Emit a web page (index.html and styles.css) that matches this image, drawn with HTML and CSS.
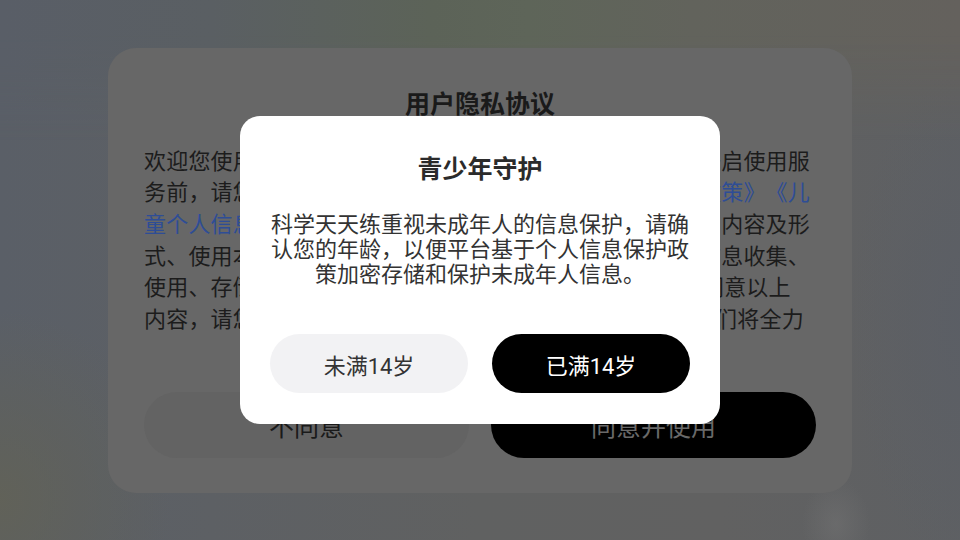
FILE: index.html
```html
<!DOCTYPE html>
<html lang="zh-CN">
<head>
<meta charset="utf-8">
<title>青少年守护</title>
<link rel="stylesheet" href="styles.css">
</head>
<body>
<main class="screen">
  <section class="card">
    <h2 class="card-title">用户隐私协议</h2>
    <div class="card-scroll">
      <p class="card-text">欢迎您使用科学天天练！我们很重视您的隐私保护，在您开启使用服<br>务前，请您务必仔细阅读并充分理解<a class="link">《用户协议》</a><a class="link">《隐私政策》</a><a class="link">《儿<br>童个人信息保护规则》</a>，以便了解我们提供的产品和服务的内容及形<br>式、使用本服务所需要遵守的规则，以及我们对您的个人信息收集、<br>使用、存储和保护14岁以下儿童信息的规则。您已阅读并同意以上<br>内容，请您点击“同意并使用”按钮开始使用我们的产品，我们将全力</p>
    </div>
    <div class="actions actions-card">
      <button class="btn btn-card-light">不同意</button>
      <button class="btn btn-card-dark">同意并使用</button>
    </div>
  </section>

  <div class="overlay">
    <div class="dialog" role="dialog">
      <h3 class="dialog-title">青少年守护</h3>
      <p class="dialog-text">科学天天练重视未成年人的信息保护，请确认您的年龄，以便平台基于个人信息保护政策加密存储和保护未成年人信息。</p>
      <div class="actions actions-dialog">
        <button class="btn btn-light">未满14岁</button>
        <button class="btn btn-dark">已满14岁</button>
      </div>
    </div>
  </div>
</main>
</body>
</html>
```
FILE: styles.css
```css
* { box-sizing: border-box; }

html, body {
  margin: 0;
  padding: 0;
}

body {
  width: 960px;
  height: 540px;
  overflow: hidden;
  font-family: Roboto, "Noto Sans CJK SC", sans-serif;
  text-spacing-trim: space-all;
}

.screen {
  position: relative;
  width: 960px;
  height: 540px;
  display: flex;
  align-items: center;
  justify-content: center;
  background:
    radial-gradient(ellipse 34px 46px at 836px 524px, rgba(118,118,118,0.45), rgba(118,118,118,0) 100%),
    radial-gradient(ellipse 170px 190px at 0px 500px, rgba(98,98,86,0.85), rgba(98,98,86,0) 100%),
    radial-gradient(ellipse 110px 250px at 960px 320px, rgba(90,94,102,0.7), rgba(90,94,102,0) 100%),
    linear-gradient(90deg, #5a5f67 0%, #5d6064 22%, #606161 50%, #616161 75%, #5e6063 100%);
}

.screen::before {
  content: "";
  position: absolute;
  left: 0;
  top: 0;
  width: 960px;
  height: 140px;
  background: linear-gradient(90deg, #595e67 0%, #5a5f63 22%, #5c6358 45%, #5e6559 55%, #62635c 72%, #64615d 100%);
  -webkit-mask-image: linear-gradient(180deg, #000 0%, #000 25%, transparent 100%);
  mask-image: linear-gradient(180deg, #000 0%, #000 25%, transparent 100%);
}

/* background privacy card (dimmed) */
.card {
  position: relative;
  width: 744px;
  height: 445px;
  padding: 42px 36px 35px;
  background: #676767;
  border-radius: 28px;
  display: flex;
  flex-direction: column;
}

.card-title {
  margin: 0;
  height: 30px;
  line-height: 30px;
  font-size: 25px;
  font-weight: 700;
  text-align: center;
  color: #1a1a1a;
}

.card-scroll {
  margin-top: 26px;
  height: 191px;
  overflow: hidden;
}

.card-text {
  margin: 0;
  white-space: nowrap;
  font-size: 22px;
  letter-spacing: 0.2px;
  line-height: 31.7px;
  color: #1c1c1c;
}

.link {
  color: #2e4d96;
  text-decoration: none;
}

.actions {
  display: flex;
}

.actions-card {
  margin-top: 55px;
  gap: 22px;
}

.btn {
  flex: 1;
  border: none;
  margin: 0;
  padding: 0;
  font-family: Roboto, "Noto Sans CJK SC", sans-serif;
  cursor: pointer;
}

.btn-card-light,
.btn-card-dark {
  height: 66px;
  border-radius: 33px;
  font-size: 25px;
}

.btn-card-light {
  background: #636363;
  color: #1a1a1a;
}

.btn-card-dark {
  background: #000;
  color: #696969;
}

/* teen-protection dialog */
.overlay {
  position: absolute;
  inset: 0;
  display: flex;
  align-items: center;
  justify-content: center;
}

.dialog {
  width: 480px;
  height: 308px;
  padding: 39px 30px 31px;
  background: #fff;
  border-radius: 20px;
  display: flex;
  flex-direction: column;
}

.dialog-title {
  margin: 0;
  height: 30px;
  line-height: 30px;
  font-size: 25px;
  font-weight: 700;
  text-align: center;
  color: #2b2b2b;
}

.dialog-text {
  margin: 27px 0 0;
  font-size: 22px;
  line-height: 25px;
  text-align: center;
  color: #333;
}

.actions-dialog {
  margin-top: auto;
  gap: 24px;
}

.btn-light,
.btn-dark {
  height: 59px;
  border-radius: 30px;
  font-size: 22px;
}

.btn-light {
  background: #f2f2f4;
  color: #333;
}

.btn-dark {
  background: #000;
  color: #fff;
}
```
